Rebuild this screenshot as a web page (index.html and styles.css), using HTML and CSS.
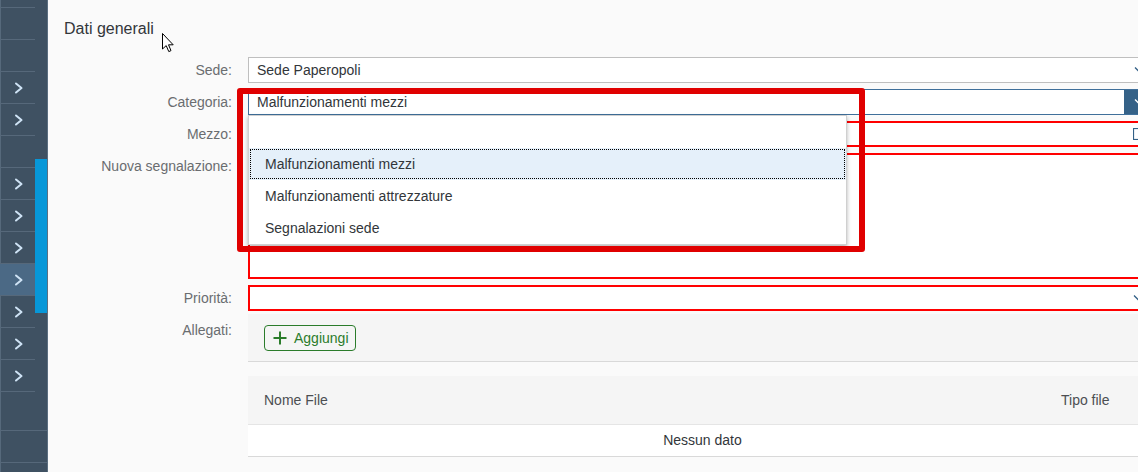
FILE: index.html
```html
<!DOCTYPE html>
<html lang="it">
<head>
<meta charset="utf-8">
<title>Dati generali</title>
<link rel="stylesheet" href="styles.css">
</head>
<body>
<div class="app">
  <aside class="sidebar">
    <div class="nav">
      <div class="nav-list">
        <div class="nav-item"></div>
        <div class="nav-item"></div>
        <div class="nav-item"><svg class="chev" width="10" height="12" viewBox="0 0 10 12"><path d="M2 1.5 L7.5 6 L2 10.5"/></svg></div>
        <div class="nav-item"><svg class="chev" width="10" height="12" viewBox="0 0 10 12"><path d="M2 1.5 L7.5 6 L2 10.5"/></svg></div>
        <div class="nav-item"></div>
        <div class="nav-item"><svg class="chev" width="10" height="12" viewBox="0 0 10 12"><path d="M2 1.5 L7.5 6 L2 10.5"/></svg></div>
        <div class="nav-item"><svg class="chev" width="10" height="12" viewBox="0 0 10 12"><path d="M2 1.5 L7.5 6 L2 10.5"/></svg></div>
        <div class="nav-item"><svg class="chev" width="10" height="12" viewBox="0 0 10 12"><path d="M2 1.5 L7.5 6 L2 10.5"/></svg></div>
        <div class="nav-item active"><svg class="chev" width="10" height="12" viewBox="0 0 10 12"><path d="M2 1.5 L7.5 6 L2 10.5"/></svg></div>
        <div class="nav-item"><svg class="chev" width="10" height="12" viewBox="0 0 10 12"><path d="M2 1.5 L7.5 6 L2 10.5"/></svg></div>
        <div class="nav-item"><svg class="chev" width="10" height="12" viewBox="0 0 10 12"><path d="M2 1.5 L7.5 6 L2 10.5"/></svg></div>
        <div class="nav-item"><svg class="chev" width="10" height="12" viewBox="0 0 10 12"><path d="M2 1.5 L7.5 6 L2 10.5"/></svg></div>
      </div>
      <div class="scroll-track"><div class="scroll-thumb"></div></div>
    </div>
    <div class="nav-foot">
      <div class="foot-item"></div>
      <div class="foot-item"></div>
    </div>
  </aside>

  <main class="content">
    <h2 class="title">Dati generali</h2>
    <div class="form">
      <div class="label">Sede:</div>
      <div class="field">
        <div class="input">
          <span class="value">Sede Paperopoli</span>
          <span class="icon"><svg width="12" height="8" viewBox="0 0 12 8"><path class="arrow" d="M1 1.5 L6 6.5 L11 1.5"/></svg></span>
        </div>
      </div>

      <div class="label">Categoria:</div>
      <div class="field">
        <div class="input focus">
          <span class="value">Malfunzionamenti mezzi</span>
          <span class="icon"><svg width="12" height="8" viewBox="0 0 12 8"><path class="arrow white" d="M1 1.5 L6 6.5 L11 1.5"/></svg></span>
        </div>
        <div class="popup">
          <div class="option"></div>
          <div class="option selected">Malfunzionamenti mezzi</div>
          <div class="option">Malfunzionamenti attrezzature</div>
          <div class="option">Segnalazioni sede</div>
        </div>
      </div>

      <div class="label">Mezzo:</div>
      <div class="field">
        <div class="input error">
          <span class="value"></span>
          <span class="icon"><svg width="12" height="12" viewBox="0 0 12 12"><rect class="vh" x="0.5" y="0.5" width="11" height="11"/></svg></span>
        </div>
      </div>

      <div class="label">Nuova segnalazione:</div>
      <div class="field">
        <div class="textarea"></div>
      </div>

      <div class="label">Priorità:</div>
      <div class="field">
        <div class="input error">
          <span class="value"></span>
          <span class="icon"><svg width="12" height="8" viewBox="0 0 12 8"><path class="arrow" d="M1 1.5 L6 6.5 L11 1.5"/></svg></span>
        </div>
      </div>

      <div class="label">Allegati:</div>
      <div class="field attach">
        <div class="toolbar">
          <button class="btn" type="button">
            <svg width="14" height="14" viewBox="0 0 14 14"><path class="plus" d="M7 0.5 V13.5 M0.5 7 H13.5"/></svg>
            <span>Aggiungi</span>
          </button>
        </div>
        <div class="table">
          <div class="thead">
            <div class="col1">Nome File</div>
            <div class="col2">Tipo file</div>
          </div>
          <div class="empty-row">Nessun dato</div>
        </div>
      </div>
    </div>
  </main>
</div>

<div class="annotation"></div>
<svg class="cursor" width="13" height="20" viewBox="0 0 13 20"><path d="M0.5 0.5 L0.5 16 L4.2 12.6 L6.8 18.6 L9 17.6 L6.5 11.8 L11.2 11.8 Z"/></svg>
</body>
</html>
```

FILE: styles.css
```css
* { box-sizing: border-box; }

body {
  margin: 0;
  width: 1138px;
  height: 472px;
  overflow: hidden;
  position: relative;
  font-family: "Liberation Sans", Arial, sans-serif;
  background: #fafafa;
}

.app {
  display: flex;
  height: 472px;
}

/* ---------- sidebar ---------- */
.sidebar {
  width: 48px;
  flex: none;
  background: #3f5162;
  border-right: 1px solid #5c6f81;
  box-shadow: inset 1px 0 #56697b;
  display: flex;
  flex-direction: column;
}

.nav {
  display: flex;
}

.nav-list {
  width: 35px;
  padding-top: 7px;
  border-bottom: 1px solid #56687a;
}

.nav-item {
  height: 32px;
  border-top: 1px solid #56687a;
  display: flex;
  align-items: center;
  justify-content: center;
  padding-left: 3px;
}

.nav-item.active {
  background: #4b6985;
}

.chev path {
  fill: none;
  stroke: #cfe3f5;
  stroke-width: 2;
  stroke-linecap: round;
  stroke-linejoin: round;
}

.scroll-track {
  width: 12px;
}

.scroll-thumb {
  margin-top: 159px;
  height: 154px;
  background: #0797d8;
}

.nav-foot {
  margin-top: 38px;
}

.foot-item {
  height: 32px;
  border-top: 1px solid #56687a;
}

/* ---------- content ---------- */
.content {
  flex: 1;
  min-width: 0;
  background: #fafafa;
  overflow: hidden;
  padding-left: 16px;
}

.title {
  margin: 0;
  padding-top: 20px;
  line-height: 18px;
  font-size: 16px;
  font-weight: normal;
  color: #32363a;
}

.form {
  margin-top: 16px;
  width: 1093px;
  display: grid;
  grid-template-columns: 168px 1fr;
  column-gap: 16px;
}

.label {
  font-size: 14px;
  color: #6a6d70;
  text-align: right;
  line-height: 32px;
  white-space: nowrap;
}

.field {
  padding: 3px 0;
  position: relative;
}

.input {
  height: 26px;
  border: 1px solid #bfbfbf;
  background: #fff;
  display: flex;
  align-items: center;
  font-size: 14px;
  color: #32363a;
}

.input .value {
  flex: 1;
  padding-left: 8px;
}

.input .icon {
  width: 32px;
  height: 100%;
  display: flex;
  align-items: center;
  justify-content: center;
}

.arrow {
  fill: none;
  stroke: #346187;
  stroke-width: 1.3;
}

.arrow.white {
  stroke: #fff;
}

.vh {
  fill: none;
  stroke: #346187;
  stroke-width: 1.2;
}

.input.focus {
  border-color: #3f6f9a;
}

.input.focus .icon {
  background: #346187;
}

.input.error {
  border: 2px solid #ff0000;
}

.textarea {
  height: 126px;
  border: 2px solid #ff0000;
  background: #fff;
}

/* ---------- dropdown ---------- */
.popup {
  position: absolute;
  top: 29px;
  left: 0;
  width: 599px;
  height: 130px;
  background: #fff;
  border: 1px solid #d0d0d0;
  box-shadow: 0 2px 4px rgba(0, 0, 0, 0.3);
  z-index: 5;
}

.option {
  height: 32px;
  line-height: 32px;
  padding-left: 16px;
  font-size: 14px;
  color: #32363a;
}

.option.selected {
  background: #e5f0fa;
  outline: 1px dotted #000;
  outline-offset: -2px;
}

/* ---------- attachments ---------- */
.field.attach {
  padding: 0;
}

.toolbar {
  height: 48px;
  border-bottom: 1px solid #d9d9d9;
  background: #f5f5f5;
  padding-left: 16px;
  display: flex;
  align-items: center;
}

.btn {
  height: 26px;
  border: 1px solid #2b7c2b;
  border-radius: 4px;
  padding: 0 6px 0 8px;
  display: flex;
  align-items: center;
  gap: 7px;
  color: #2b7c2b;
  font-family: inherit;
  font-size: 14px;
  background: transparent;
}

.plus {
  fill: none;
  stroke: #2b7c2b;
  stroke-width: 2;
}

.table {
  margin-top: 14px;
}

.thead {
  height: 49px;
  background: #f5f5f5;
  border-bottom: 1px solid #e5e5e5;
  display: flex;
  align-items: center;
  font-size: 14px;
  color: #4c4f52;
}

.col1 {
  width: 797px;
  padding-left: 16px;
}

.col2 {
  padding-left: 16px;
}

.empty-row {
  height: 32px;
  background: #fff;
  border-bottom: 1px solid #d9d9d9;
  text-align: center;
  line-height: 31px;
  font-size: 14px;
  color: #32363a;
}

/* ---------- overlays ---------- */
.annotation {
  position: absolute;
  left: 237px;
  top: 88px;
  width: 628px;
  height: 164px;
  border: 6px solid #e00000;
  border-radius: 3px;
  z-index: 10;
}

.cursor {
  position: absolute;
  left: 162px;
  top: 33px;
  z-index: 11;
}

.cursor path {
  fill: #fff;
  stroke: #000;
  stroke-width: 1;
  stroke-linejoin: miter;
}
```
